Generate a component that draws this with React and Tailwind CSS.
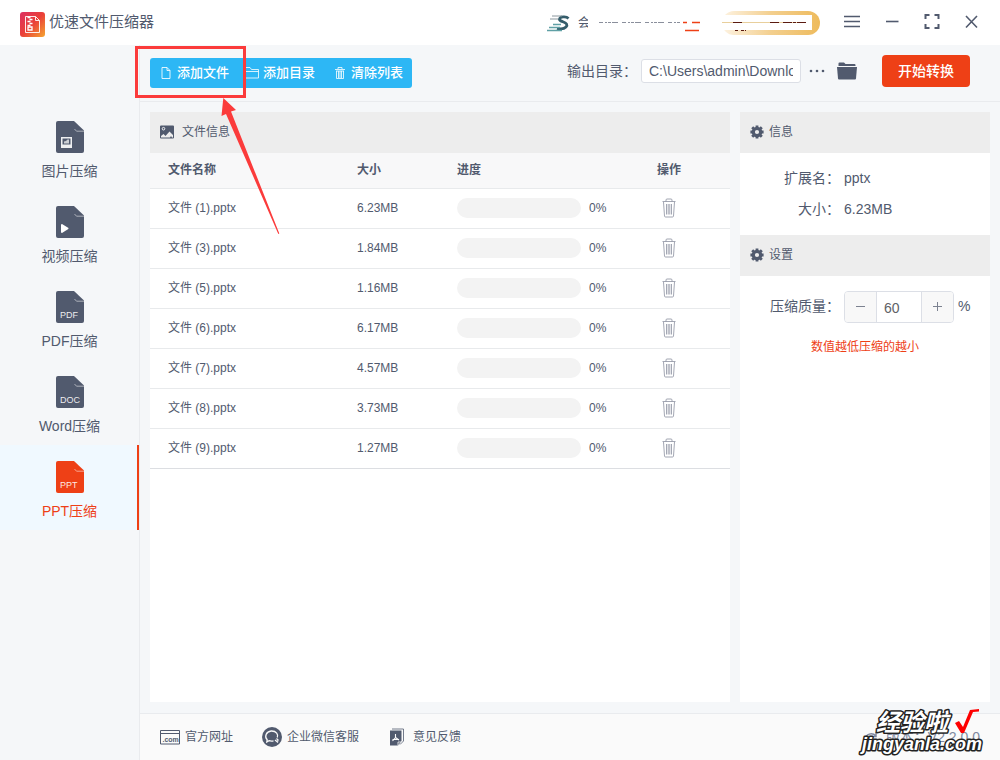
import { useState } from 'react'

const tabs = [
  { id: 'image', label: '图片压缩' },
  { id: 'video', label: '视频压缩' },
  { id: 'pdf', label: 'PDF压缩', mark: 'PDF' },
  { id: 'word', label: 'Word压缩', mark: 'DOC' },
  { id: 'ppt', label: 'PPT压缩', mark: 'PPT' },
]

const initialFiles = [
  { name: '文件 (1).pptx', size: '6.23MB', progress: 0 },
  { name: '文件 (3).pptx', size: '1.84MB', progress: 0 },
  { name: '文件 (5).pptx', size: '1.16MB', progress: 0 },
  { name: '文件 (6).pptx', size: '6.17MB', progress: 0 },
  { name: '文件 (7).pptx', size: '4.57MB', progress: 0 },
  { name: '文件 (8).pptx', size: '3.73MB', progress: 0 },
  { name: '文件 (9).pptx', size: '1.27MB', progress: 0 },
]

function AppLogo() {
  return (
    <svg width="25" height="25" viewBox="0 0 25 25" fill="none">
      <defs>
        <linearGradient id="logo" x1="0" y1="0" x2="1" y2="1">
          <stop offset="0" stopColor="#dc2f62" />
          <stop offset="0.5" stopColor="#ea4038" />
          <stop offset="1" stopColor="#f5a631" />
        </linearGradient>
      </defs>
      <rect width="25" height="25" rx="3" fill="url(#logo)" />
      <path d="M5.5 4.5h10l4 4v12h-14zM15.5 4.5v4h4" stroke="#fff" strokeOpacity="0.9" />
      <path d="M7.5 5.5h3M9.5 7.5h3M7.5 9.5h3M9.5 11.5h3M7.5 13.5h3" stroke="#fff" strokeWidth="1.3" />
      <path d="M8 15h4v3H8z" stroke="#fff" strokeWidth="1.3" />
    </svg>
  )
}

function TabIcon({ id, mark }) {
  return (
    <svg width="28" height="32" viewBox="1 0 28 32">
      <path d="M3 0h16l10 9.5V30a2 2 0 0 1-2 2H3a2 2 0 0 1-2-2V2a2 2 0 0 1 2-2z" fill="currentColor" />
      <path d="M19.5 8l2 2.2H29" fill="none" stroke="#fff" strokeOpacity="0.65" strokeWidth="0.8" />
      {id === 'image' && (
        <>
          <path d="M6 16h11v11H6z" fill="#fff" fillOpacity="0.9" />
          <path d="M7.500 17.500h8v6h-8z" fill="currentColor" />
          <path d="M9 22.500v-2l2-.5 1.500-1.500H14v4z" fill="#fff" fillOpacity="0.7" />
        </>
      )}
      {id === 'video' && <path d="M6 18.500l1-.5 6.500 4-.2 1L7 27l-1-.5z" fill="#fff" />}
      {mark && (
        <text x="5" y="27" fontSize="9" fill="#fff" fillOpacity="0.9">
          {mark}
        </text>
      )}
    </svg>
  )
}

function TrashIcon() {
  return (
    <svg width="14" height="20" viewBox="0 0 14 20" fill="none" stroke="#8b91a0" strokeWidth="0.8">
      <path d="M.5 3.500h13" />
      <path d="M4 3.500V2q0-1 1-1h4q1 0 1 1v1.500M1.500 4l1 14q.1 1 1 1h7q.9 0 1-1l1-14" />
      <path d="M4.500 6v10.500M6.200 6v10.500M7.800 6v10.500M9.500 6v10.500" />
    </svg>
  )
}

function GearIcon() {
  return (
    <svg width="14" height="14" viewBox="0 0 14 14" fill="none" stroke="currentColor">
      <circle cx="7" cy="7" r="3.700" strokeWidth="3.200" />
      <path d="M7 .4v2M7 11.600v2M.4 7h2M11.600 7h2M2.200 2.200l1.500 1.500M10.300 10.300l1.500 1.500M2.200 11.800l1.500-1.500M10.300 3.700l1.500-1.500" strokeWidth="2.800" />
    </svg>
  )
}

function PictureIcon() {
  return (
    <svg width="14" height="14" viewBox="0 0 14 14">
      <path d="M1 .5h12a1 1 0 0 1 1 1v11a1 1 0 0 1-1 1H1a1 1 0 0 1-1-1v-11a1 1 0 0 1 1-1z" fill="currentColor" />
      <circle cx="3.500" cy="3.700" r="1.300" fill="none" stroke="#fff" strokeWidth="0.9" />
      <path d="M1 12.500V11l2.500-2 2 2 4-4.500L13 10v2.500h-1l-1-1.500-1 1.500z" fill="#eee" />
    </svg>
  )
}

function SpeedLogo() {
  return (
    <svg width="26" height="20" viewBox="0 0 26 20" fill="none">
      <path d="M22.500 5.500c-2-2-7-2-8.500-.5-1.500 2 .5 3 3.500 4s4.500 3 2.500 5-6 2-9 1.300" stroke="#355d6b" strokeWidth="2.800" />
      <path d="M6 3h10M4 6h8" stroke="#8b979e" strokeWidth="1" />
      <path d="M7 11.500h8M3 14.500h11M1 17.500h15" stroke="#5fa0a5" strokeWidth="1.300" />
    </svg>
  )
}

function Header() {
  return (
    <header className="flex h-[45px] shrink-0 items-center bg-white px-5">
      <div className="flex items-center gap-1 pt-1">
        <AppLogo />
        <h1 className="pb-1 text-[15px]">优速文件压缩器</h1>
      </div>
      <div className="ml-auto flex items-center">
        <SpeedLogo />
        <span className="ml-1.5 w-[10px] overflow-hidden text-xs">会</span>
        <svg className="ml-2.5" width="104" height="24" viewBox="0 0 104 24" fill="none">
          <path d="M1 11.500h82" stroke="#8a8f9c" strokeDasharray="4 2 2 1 3 1 6 4" />
          <path d="M85 11.500h4M94 11.500h8M87 19.500h14" stroke="#ee4016" strokeWidth="1.500" />
        </svg>
        <div className="ml-5 flex h-6 w-[98px] items-center rounded-full bg-linear-to-r from-[#fdf3e2] via-[#f3cf8e] to-[#eebb5c]">
          <svg width="90" height="24" viewBox="0 0 90 24" fill="none">
            <path d="M0 4h90v15H0z" fill="#fff" />
            <path d="M0 11.500h84" stroke="#e8cf9c" />
            <path d="M11 11.500h9M48 11.500h9M61 11.500h23" stroke="#5a1a10" strokeDasharray="9 1 3 1" />
            <path d="M13 19.500h4M19 19.500h5" stroke="#5a1a10" strokeDasharray="3 1" />
          </svg>
        </div>
        <div className="ml-6 flex gap-6 pb-0.5">
          <button type="button" aria-label="菜单">
            <svg width="16" height="16" viewBox="0 0 16 16" stroke="currentColor" strokeWidth="1.600">
              <path d="M0 2.500h16M0 7.500h16M0 12.500h16" />
            </svg>
          </button>
          <button type="button" aria-label="最小化">
            <svg width="16" height="16" viewBox="0 0 16 16" stroke="currentColor" strokeWidth="1.600">
              <path d="M2 7.500h12.500" />
            </svg>
          </button>
          <button type="button" aria-label="最大化">
            <svg width="16" height="16" viewBox="0 0 16 16" fill="none" stroke="currentColor" strokeWidth="2">
              <path d="M1.500 5V1h4M10.500 1h4v4M14.500 10v4h-4M5.500 14h-4v-4" />
            </svg>
          </button>
          <button type="button" aria-label="关闭">
            <svg width="16" height="16" viewBox="0 0 16 16" stroke="currentColor" strokeWidth="1.600">
              <path d="M2 2l11 11.500M13 2L2 13.500" />
            </svg>
          </button>
        </div>
      </div>
    </header>
  )
}

function Sidebar({ active, onChange }) {
  return (
    <nav className="w-[140px] shrink-0 border-r border-[#e9ebee] pt-[60px]">
      {tabs.map((tab) => (
        <button
          key={tab.id}
          type="button"
          onClick={() => onChange(tab.id)}
          className={
            'flex h-[85px] w-full flex-col items-center border-r-2 pl-0.5 pt-4 text-sm ' +
            (tab.id === active ? 'border-[#ee4016] bg-[#f0f9ff] text-[#ee4016]' : 'border-transparent')
          }
        >
          <TabIcon id={tab.id} mark={tab.mark} />
          <span className="mt-2">{tab.label}</span>
        </button>
      ))}
    </nav>
  )
}

function Toolbar({ onClear }) {
  return (
    <div className="flex h-[57px] shrink-0 items-center border-b border-[#e9ebee] pl-[10px] pr-[30px]">
      <div className="flex h-[30px] overflow-hidden rounded-[3px] bg-[#2db7f5] text-[13px] font-medium text-white">
        <button type="button" className="flex items-center gap-1.5 pl-[11px] pr-2">
          <svg width="10" height="12" viewBox="0 0 10 12" fill="none" stroke="currentColor" strokeOpacity="0.85">
            <path d="M1 .5h5l3 3v8H1zM6 .5v3h3" />
          </svg>
          添加文件
        </button>
        <button type="button" className="flex items-center gap-1 px-2">
          <svg width="14" height="12" viewBox="0 0 14 12" fill="none" stroke="currentColor" strokeOpacity="0.8">
            <path d="M.5 11V.5H5l1.500 2h7V11zM.5 4.500h13" />
          </svg>
          添加目录
        </button>
        <button type="button" onClick={onClear} className="flex items-center gap-1.5 pl-3 pr-[9px]">
          <svg width="10" height="12" viewBox="0 0 10 12" fill="none" stroke="currentColor" strokeOpacity="0.8">
            <path d="M0 2.500h10M3 2V.5h4V2M1 4h8M1.500 4v7.500h7V4M3.500 4v7M5 4v7M6.500 4v7" />
          </svg>
          清除列表
        </button>
      </div>
      <div className="ml-auto flex items-center pb-1">
        <label htmlFor="output" className="text-sm">
          输出目录：
        </label>
        <input
          id="output"
          className="ml-1 h-6 w-40 rounded-[3px] border border-[#dcdfe6] bg-white px-[7px] text-sm"
          defaultValue="C:\Users\admin\Downloads"
        />
        <button type="button" aria-label="选择目录" className="ml-2">
          <svg width="16" height="4" viewBox="0 0 16 4" fill="currentColor">
            <circle cx="2" cy="2" r="1.300" />
            <circle cx="8" cy="2" r="1.300" />
            <circle cx="14" cy="2" r="1.300" />
          </svg>
        </button>
        <button type="button" aria-label="打开目录" className="ml-3">
          <svg width="20" height="18" viewBox="0 0 20 18" fill="currentColor">
            <path d="M1.500 4V1.500q0-1 1-1H7L8.500 2h9q1 0 1 1v1z" />
            <path d="M0 5h20l-1 11.500q-.1 1-1 1H2q-.9 0-1-1z" />
          </svg>
        </button>
        <button type="button" className="ml-[25px] h-8 w-[88px] rounded bg-[#ee4016] text-sm font-medium text-white">
          开始转换
        </button>
      </div>
    </div>
  )
}

function FileTable({ files, onRemove }) {
  return (
    <section className="min-w-0 flex-1 bg-white">
      <h2 className="flex h-[41px] items-center gap-2 bg-[#ededed] px-[10px] pb-0.5 text-xs">
        <PictureIcon />
        文件信息
      </h2>
      <table className="w-full table-fixed text-left text-xs">
        <thead className="bg-[#f8f8f9]">
          <tr className="h-[35px] border-b border-[#e8eaec]">
            <th className="pl-[18px] font-bold">文件名称</th>
            <th className="w-[100px] px-[10px] font-bold">大小</th>
            <th className="w-[200px] px-[10px] font-bold">进度</th>
            <th className="w-[83px] px-[10px] font-bold">操作</th>
          </tr>
        </thead>
        <tbody>
          {files.map((file) => (
            <tr key={file.name} className="h-10 border-b border-[#e8eaec] last:border-[#dcdee2]">
              <td className="pl-[18px]">{file.name}</td>
              <td className="px-[10px]">{file.size}</td>
              <td className="px-[10px]">
                <div className="flex items-center gap-2">
                  <div className="h-5 w-[124px] overflow-hidden rounded-full bg-[#f3f3f3]">
                    <div className="h-full bg-[#2db7f5]" style={{ width: file.progress + '%' }} />
                  </div>
                  <span>{file.progress}%</span>
                </div>
              </td>
              <td className="px-[15px]">
                <button type="button" aria-label="删除" className="block" onClick={() => onRemove(file.name)}>
                  <TrashIcon />
                </button>
              </td>
            </tr>
          ))}
        </tbody>
      </table>
    </section>
  )
}

function PanelTitle({ children }) {
  return (
    <h2 className="flex h-[41px] items-center gap-[5px] bg-[#ededed] px-[10px] pb-0.5 text-xs">
      <GearIcon />
      {children}
    </h2>
  )
}

function SidePanel() {
  const [quality, setQuality] = useState(60)

  return (
    <aside className="w-[250px] shrink-0 bg-white text-sm">
      <PanelTitle>信息</PanelTitle>
      <dl className="grid h-[82px] grid-cols-[100px_1fr] content-center gap-x-1 gap-y-[11px] pb-0.5">
        <dt className="text-right">扩展名：</dt>
        <dd>pptx</dd>
        <dt className="text-right">大小：</dt>
        <dd>6.23MB</dd>
      </dl>
      <PanelTitle>设置</PanelTitle>
      <div className="flex items-center pt-[15px]">
        <label htmlFor="quality" className="w-[100px] pb-0.5 text-right">
          压缩质量：
        </label>
        <div className="ml-1 flex h-8 w-[110px] overflow-hidden rounded border border-[#dcdfe6]">
          <button
            type="button"
            aria-label="减少"
            onClick={() => setQuality(quality - 1)}
            className="flex w-8 shrink-0 items-center justify-center border-r border-[#dcdfe6] bg-[#f8f8f8]"
          >
            <svg width="10" height="10" viewBox="0 0 10 10" stroke="#7c8290">
              <path d="M0 4.500h9" />
            </svg>
          </button>
          <input
            id="quality"
            inputMode="numeric"
            className="min-w-0 flex-1 px-[7px] pt-0.5 text-sm text-[#606266]"
            value={quality}
            onChange={(e) => setQuality(Number(e.target.value) || 0)}
          />
          <button
            type="button"
            aria-label="增加"
            onClick={() => setQuality(quality + 1)}
            className="flex w-8 shrink-0 items-center justify-center border-l border-[#dcdfe6] bg-[#f8f8f8]"
          >
            <svg width="10" height="10" viewBox="0 0 10 10" stroke="#7c8290">
              <path d="M0 4.500h9M4.500 0v9" />
            </svg>
          </button>
        </div>
        <span className="ml-1 pb-0.5">%</span>
      </div>
      <p className="mt-4 text-center text-xs text-[#ee4016]">数值越低压缩的越小</p>
    </aside>
  )
}

function Footer() {
  return (
    <footer className="flex h-[47px] shrink-0 items-center border-t border-[#e9ebee] bg-[#fafafa] px-5 text-xs">
      <a href="#site" className="flex items-center gap-[5px]">
        <svg width="20" height="16" viewBox="0 0 20 16" fill="none" stroke="currentColor">
          <path d="M.5 1.500h19v13.500H.5zM.5 4.500h19" />
          <text x="2.500" y="13" fontSize="7" fontWeight="bold" fill="currentColor" stroke="none">
            .com
          </text>
        </svg>
        官方网址
      </a>
      <a href="#service" className="ml-7 flex items-center gap-1">
        <svg width="22" height="22" viewBox="0 0 22 22" fill="none">
          <circle cx="11" cy="11" r="10" fill="currentColor" />
          <path d="M12.500 14.800c-1.500.4-3 .3-4.500-.1L5.800 16l.4-2.300c-3-3-1.200-8.200 4-8.700 5.300-.2 7.300 3.500 6.100 6.500" stroke="#fafafa" strokeWidth="1.300" />
          <path d="M15.500 12.500l2 2M14 14l3 2.500M17.500 14.500l-1.500 1" stroke="#fafafa" strokeWidth="1.200" />
        </svg>
        企业微信客服
      </a>
      <a href="#feedback" className="ml-7 flex items-center gap-1.5">
        <svg width="20" height="18" viewBox="0 0 20 18" fill="none">
          <path d="M5 1h11.500v12L13 16.500" stroke="currentColor" strokeWidth="0.8" />
          <path d="M3 2.500h11.500V13L11 17.500H3z" fill="currentColor" />
          <path d="M8.500 6v3.500L5.500 13M8.500 9.500l3.500 2.500M5.500 11.500h6.500" stroke="#fafafa" strokeWidth="1.100" />
          <path d="M11 17.500V14h3.500" stroke="#fafafa" strokeWidth="0.8" />
        </svg>
        意见反馈
      </a>
      <div className="ml-auto flex items-center gap-1.5 text-sm text-[#8089a0]">
        <svg width="16" height="14" viewBox="0 0 16 14" fill="none" stroke="currentColor" strokeWidth="1.500">
          <path d="M1 9c1-5 7-7 11-3M12 2v4.500H8" />
        </svg>
        <span>版本：V2.2.0.0</span>
      </div>
    </footer>
  )
}

function Annotation() {
  return (
    <>
      <div className="pointer-events-none absolute left-[135px] top-[46px] h-[52px] w-[111px] border-3 border-[#fb3b3b]" />
      <svg className="pointer-events-none absolute left-[215px] top-[95px]" width="70" height="145" viewBox="215 95 70 145">
        <path d="M223.300 98L236 110l-5 1.500 48.300 122-1 .5L226 114l-4.500 2z" fill="#fb3b3b" />
      </svg>
    </>
  )
}

function Watermark() {
  return (
    <svg
      className="pointer-events-none absolute bottom-0 right-2 font-bold"
      width="136"
      height="56"
      viewBox="0 0 136 56"
      fill="#fff"
      stroke="#222"
      strokeWidth="3"
      strokeLinejoin="round"
      paintOrder="stroke"
    >
      <text x="20" y="27" fontSize="24" fontStyle="italic">
        经验啦
      </text>
      <text x="6" y="46" fontSize="18" fontStyle="italic">
        jingyanla.com
      </text>
      <path d="M99 19l4-2 4 6 7-17 9-1v2.500l-6 .5-9 21h-3z" fill="#fe0000" stroke="none" />
    </svg>
  )
}

export default function App() {
  const [active, setActive] = useState('ppt')
  const [files, setFiles] = useState(initialFiles)

  return (
    <div className="relative flex min-h-screen flex-col bg-[#f5f7f9] font-['Liberation_Sans','Noto_Sans_CJK_SC',sans-serif] text-[#515a6e]">
      <Header />
      <div className="flex flex-1">
        <Sidebar active={active} onChange={setActive} />
        <main className="flex min-w-0 flex-1 flex-col">
          <Toolbar onClear={() => setFiles([])} />
          <div className="flex flex-1 gap-[10px] px-[10px] pb-[11px] pt-[10px]">
            <FileTable files={files} onRemove={(name) => setFiles(files.filter((f) => f.name !== name))} />
            <SidePanel />
          </div>
          <Footer />
        </main>
      </div>
      <Annotation />
      <Watermark />
    </div>
  )
}
